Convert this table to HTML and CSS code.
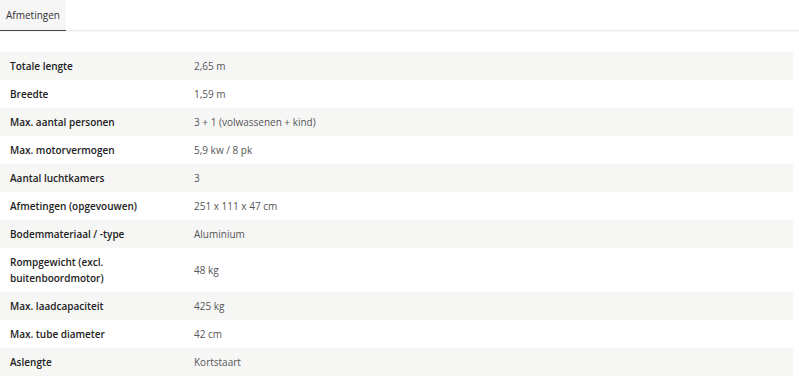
FILE: index.html
```html
<!DOCTYPE html>
<html lang="nl">
<head>
<meta charset="utf-8">
<title>Afmetingen</title>
<link rel="stylesheet" href="styles.css">
</head>
<body>
<div class="tabs">
  <div class="tab active">Afmetingen</div>
</div>
<table class="specs">
  <tbody>
    <tr><th>Totale lengte</th><td>2,65 m</td></tr>
    <tr><th>Breedte</th><td>1,59 m</td></tr>
    <tr><th>Max. aantal personen</th><td>3 + 1 (volwassenen + kind)</td></tr>
    <tr><th>Max. motorvermogen</th><td>5,9 kw / 8 pk</td></tr>
    <tr><th>Aantal luchtkamers</th><td>3</td></tr>
    <tr><th>Afmetingen (opgevouwen)</th><td>251 x 111 x 47 cm</td></tr>
    <tr><th>Bodemmateriaal / -type</th><td>Aluminium</td></tr>
    <tr><th>Rompgewicht (excl. buitenboordmotor)</th><td>48 kg</td></tr>
    <tr><th>Max. laadcapaciteit</th><td>425 kg</td></tr>
    <tr><th>Max. tube diameter</th><td>42 cm</td></tr>
    <tr><th>Aslengte</th><td>Kortstaart</td></tr>
  </tbody>
</table>
</body>
</html>
```
FILE: styles.css
```css
html, body {
  margin: 0;
  padding: 0;
  background: #ffffff;
}
body {
  font-family: "Open Sans", "Noto Sans", sans-serif;
  font-size: 10px;
  color: #333;
}
.tabs {
  display: flex;
  border-bottom: 1px solid #ececec;
  height: 31px;
  box-sizing: border-box;
  box-shadow: 0 1px 0 #f6f6f6;
}
.tab {
  background: #f6f6f6;
  padding: 0 6px;
  line-height: 30px;
  height: 31px;
  box-sizing: border-box;
  color: #333;
  border-bottom: 1px solid #444;
  margin-bottom: -1px;
  font-size: 10px;
}
.specs {
  margin-top: 21px;
  width: 793px;
  border-collapse: collapse;
}
.specs th,
.specs td {
  padding: 6px 10px;
  line-height: 16px;
  text-align: left;
  vertical-align: middle;
  height: 16px;
}
.specs th {
  width: 164px;
  font-weight: 600;
  color: #222;
}
.specs td {
  color: #555;
  font-weight: 400;
}
.specs tr:nth-child(odd) {
  background: #f6f6f5;
}
```
